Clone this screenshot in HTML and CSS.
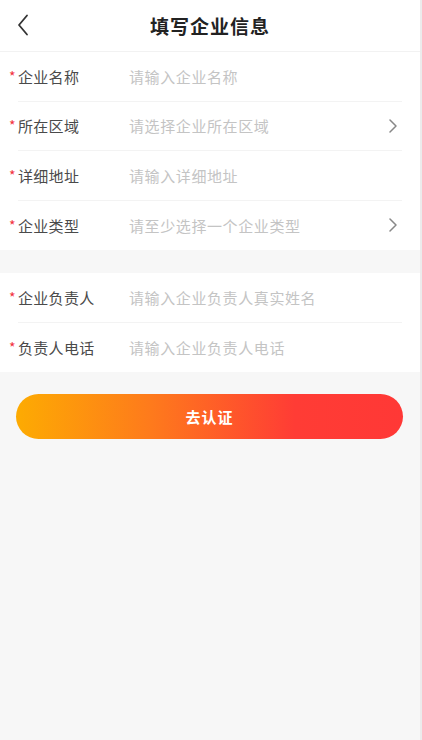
FILE: index.html
```html
<!DOCTYPE html>
<html lang="zh-CN">
<head>
  <meta charset="UTF-8">
  <meta name="viewport" content="width=device-width, initial-scale=1.0">
  <title>填写企业信息</title>
  <link rel="stylesheet" href="styles.css">
</head>
<body>

  <div class="page">
    <!-- 顶部导航 -->
    <div class="nav-bar">
      <span class="nav-back">
        <svg width="12" height="22" viewBox="0 0 12 22"><path d="M10 1.5 L2 11 L10 20.5" fill="none" stroke="#333" stroke-width="1.8" stroke-linecap="round" stroke-linejoin="round"/></svg>
      </span>
      <h1 class="nav-title">填写企业信息</h1>
    </div>

    <!-- 企业信息 -->
    <div class="form-group">
      <div class="form-row">
        <label class="form-label"><i class="required">*</i>企业名称</label>
        <span class="form-input">请输入企业名称</span>
      </div>
      <div class="form-row">
        <label class="form-label"><i class="required">*</i>所在区域</label>
        <span class="form-input">请选择企业所在区域</span>
        <span class="arrow"><svg width="8" height="14" viewBox="0 0 8 14"><path d="M1 1 L7 7 L1 13" fill="none" stroke="#888" stroke-width="1.5" stroke-linecap="round" stroke-linejoin="round"/></svg></span>
      </div>
      <div class="form-row">
        <label class="form-label"><i class="required">*</i>详细地址</label>
        <span class="form-input">请输入详细地址</span>
      </div>
      <div class="form-row">
        <label class="form-label"><i class="required">*</i>企业类型</label>
        <span class="form-input">请至少选择一个企业类型</span>
        <span class="arrow"><svg width="8" height="14" viewBox="0 0 8 14"><path d="M1 1 L7 7 L1 13" fill="none" stroke="#888" stroke-width="1.5" stroke-linecap="round" stroke-linejoin="round"/></svg></span>
      </div>
    </div>

    <!-- 负责人信息 -->
    <div class="form-group">
      <div class="form-row">
        <label class="form-label"><i class="required">*</i>企业负责人</label>
        <span class="form-input">请输入企业负责人真实姓名</span>
      </div>
      <div class="form-row">
        <label class="form-label"><i class="required">*</i>负责人电话</label>
        <span class="form-input">请输入企业负责人电话</span>
      </div>
    </div>

    <button class="submit-btn">去认证</button>
  </div>

</body>
</html>
```

FILE: styles.css
```css
/* 全局 */
body {
  margin: 0;
  font-family: "Noto Sans CJK SC", "Noto Sans", sans-serif;
  background-color: #f7f7f7;
}

.page {
  width: 420px;
  min-height: 740px;
  background-color: #f7f7f7;
  border-right: 2px solid #ececec;
}

/* 导航栏 */
.nav-bar {
  position: relative;
  height: 52px;
  display: flex;
  align-items: center;
  justify-content: center;
  background-color: #fff;
  border-bottom: 1px solid #f2f2f2;
  box-sizing: border-box;
}

.nav-back {
  position: absolute;
  left: 17px;
  top: 14px;
  display: flex;
}

.nav-title {
  margin: 0;
  font-size: 19px;
  font-weight: bold;
  color: #222;
  letter-spacing: 1px;
}

/* 表单 */
.form-group {
  background-color: #fff;
  margin-bottom: 23px;
}

.form-row {
  display: flex;
  align-items: center;
  height: 49.5px;
  margin: 0 18px;
  border-bottom: 1px solid #f3f3f3;
  box-sizing: border-box;
}

.form-row:last-child {
  border-bottom: none;
}

.form-label {
  position: relative;
  width: 111px;
  flex-shrink: 0;
  font-size: 15px;
  color: #4a4a4a;
  letter-spacing: 0.3px;
}

.required {
  position: absolute;
  left: -9px;
  top: 0;
  font-style: normal;
  font-size: 14px;
  color: #f2303d;
}

.form-input {
  flex: 1;
  font-size: 15px;
  color: #c4c4c4;
  letter-spacing: 0.6px;
}

.arrow {
  display: flex;
  margin-right: 5px;
}

/* 按钮 */
.submit-btn {
  display: block;
  width: 387px;
  height: 45px;
  margin: -1px 0 0 16px;
  border: none;
  border-radius: 23px;
  background: linear-gradient(90deg, #fdab02 0%, #fe7a1c 35%, #ff3c35 72%, #ff3836 100%);
  color: #fff;
  font-family: inherit;
  font-size: 15px;
  font-weight: bold;
  letter-spacing: 1px;
  cursor: pointer;
}
```
